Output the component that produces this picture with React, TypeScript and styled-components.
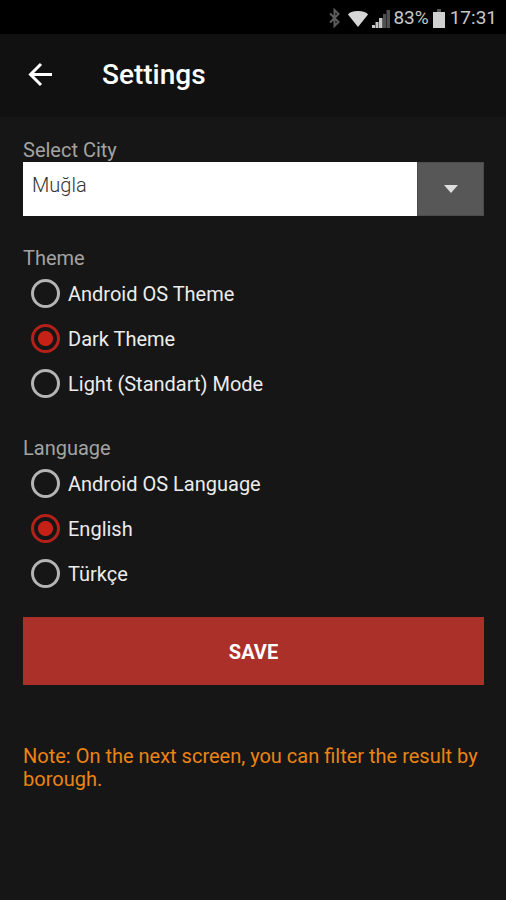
import React, { useState } from "react";
import styled, { createGlobalStyle } from "styled-components";

const GlobalStyle = createGlobalStyle`
  *, *::before, *::after { box-sizing: border-box; }
  body {
    margin: 0;
    background: #161616;
    color: #ececec;
    font-family: Roboto, "Liberation Sans", sans-serif;
    font-size: 20px;
    line-height: 24px;
  }
  button, select, input { font: inherit; }
`;

const Screen = styled.div`
  display: flex;
  flex-direction: column;
  min-height: 100vh;
  background: #161616;
`;

const StatusBar = styled.div`
  display: flex;
  align-items: center;
  justify-content: flex-end;
  height: 34px;
  padding: 2px 9px 0 0;
  background: #000;
  color: #c8c8c8;
  font-size: 19px;
`;

const StatusIcon = styled.svg<{ $gap: number }>`
  display: block;
  flex: none;
  margin-right: ${(p) => p.$gap}px;
`;

const StatusText = styled.span<{ $gap?: number }>`
  margin-right: ${(p) => p.$gap ?? 0}px;
`;

const AppBar = styled.header`
  display: flex;
  align-items: center;
  gap: 46px;
  height: 83px;
  padding: 0 24px 2px;
  background: #111;
`;

const BackButton = styled.button`
  display: flex;
  padding: 0;
  border: 0;
  background: none;
  color: #fff;
  cursor: pointer;
`;

const Title = styled.h1`
  margin: 0;
  color: #fff;
  font-size: 28px;
  line-height: 32px;
  font-weight: 500;
`;

const Form = styled.form`
  display: flex;
  flex-direction: column;
  gap: 30px;
  padding: 21px 22px 24px 23px;
`;

const Field = styled.div`
  display: flex;
  flex-direction: column;
`;

const FieldLabel = styled.label`
  line-height: 24px;
  color: #a3a3a3;
`;

const SelectBox = styled.div`
  display: grid;
  grid-template-columns: 1fr 67px;
  height: 54px;
`;

const CitySelect = styled.select`
  grid-area: 1 / 1 / 2 / 3;
  width: 100%;
  height: 54px;
  padding: 0 76px 8px 9px;
  border: 0;
  border-radius: 0;
  appearance: none;
  background: #fff;
  color: #333;
  font-weight: 300;
`;

const SelectArrow = styled.span`
  grid-area: 1 / 2 / 2 / 3;
  display: flex;
  align-items: center;
  justify-content: center;
  border: 1px solid #4c4c4c;
  background: #575757;
  pointer-events: none;
`;

const RadioGroup = styled.fieldset`
  min-width: 0;
  margin: 0;
  padding: 0;
  border: 0;
`;

const GroupLabel = styled.legend`
  padding: 0;
  line-height: 25px;
  color: #a3a3a3;
`;

const RadioRow = styled.label`
  display: flex;
  align-items: center;
  gap: 8px;
  height: 45px;
  padding-left: 8px;
  cursor: pointer;
`;

const Radio = styled.input`
  flex: none;
  width: 29px;
  height: 29px;
  margin: 0;
  border: 3px solid #b4b4b4;
  border-radius: 50%;
  appearance: none;

  &:checked {
    border-color: #b5211a;
    background: radial-gradient(circle, #c62117 7px, transparent 8px);
  }
`;

const Actions = styled.div`
  display: flex;
  flex-direction: column;
  gap: 60px;
  margin-top: -9px;
`;

const SaveButton = styled.button`
  height: 68px;
  padding: 2px 0 0;
  border: 0;
  background: #ac302a;
  color: #fff;
  font-weight: 700;
  cursor: pointer;
`;

const Note = styled.p`
  margin: 0;
  line-height: 23px;
  color: #ea8413;
`;

type OptionsProps = { name: string; legend: string; options: string[]; initial: string };

function Options({ name, legend, options, initial }: OptionsProps) {
  const [value, setValue] = useState(initial);
  return (
    <RadioGroup>
      <GroupLabel>{legend}</GroupLabel>
      {options.map((option) => (
        <RadioRow key={option}>
          <Radio
            type="radio"
            name={name}
            value={option}
            checked={value === option}
            onChange={() => setValue(option)}
          />
          {option}
        </RadioRow>
      ))}
    </RadioGroup>
  );
}

export default function App() {
  return (
    <Screen>
      <GlobalStyle />
      <StatusBar>
        <StatusIcon $gap={8} width="11" height="20" viewBox="0 0 11 20" fill="none" stroke="#5c5c5c" strokeWidth="2" aria-hidden="true">
          <path d="M1 5.500 9.500 14 5.500 18V2l4 4L1 14.500" />
        </StatusIcon>
        <StatusIcon $gap={4} width="20" height="17" viewBox="0 0 20 17" fill="#d6d6d6" aria-hidden="true">
          <path d="M0 4.500Q2 1 10 1t10 3.500L10 17Z" />
        </StatusIcon>
        <StatusIcon $gap={3} width="18" height="19" viewBox="0 0 18 19" aria-hidden="true">
          <path d="M0 16h3v3H0Z M3.500 13h3v6h-3Z M7 9h3.500v10H7Z" fill="#c8c8c8" />
          <path d="M11 5h3v14h-3Z M14.500 1H18v18h-3.500Z" fill="#505050" />
        </StatusIcon>
        <StatusText $gap={4}>83%</StatusText>
        <StatusIcon $gap={5} width="12" height="19" viewBox="0 0 12 19" aria-hidden="true">
          <path d="M4 0h4v3H4Z" fill="#555" />
          <path d="M0 3h12v16H0Z" fill="#d0d0d0" />
        </StatusIcon>
        <StatusText>17:31</StatusText>
      </StatusBar>
      <AppBar>
        <BackButton type="button" aria-label="Back">
          <svg width="32" height="32" viewBox="0 0 32 32" fill="none" stroke="currentColor" strokeWidth="3">
            <path d="M28 15.500H6.500M17 5 6.500 15.500 17 26" />
          </svg>
        </BackButton>
        <Title>Settings</Title>
      </AppBar>
      <Form onSubmit={(e) => e.preventDefault()}>
        <Field>
          <FieldLabel htmlFor="city">Select City</FieldLabel>
          <SelectBox>
            <CitySelect id="city" defaultValue="Muğla">
              <option>Muğla</option>
            </CitySelect>
            <SelectArrow>
              <svg width="14" height="8" viewBox="0 0 14 8" fill="#dedede" aria-hidden="true">
                <path d="M0 0h14L7 8Z" />
              </svg>
            </SelectArrow>
          </SelectBox>
        </Field>
        <Options
          name="theme"
          legend="Theme"
          options={["Android OS Theme", "Dark Theme", "Light (Standart) Mode"]}
          initial="Dark Theme"
        />
        <Options
          name="language"
          legend="Language"
          options={["Android OS Language", "English", "Türkçe"]}
          initial="English"
        />
        <Actions>
          <SaveButton type="submit">SAVE</SaveButton>
          <Note>Note: On the next screen, you can filter the result by borough.</Note>
        </Actions>
      </Form>
    </Screen>
  );
}
